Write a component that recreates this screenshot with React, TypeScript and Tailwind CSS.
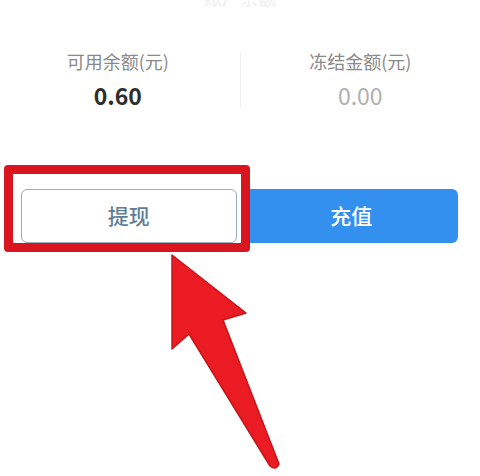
const FONT = { fontFamily: '"Noto Sans CJK SC", "Noto Sans", sans-serif' };

function Balance({ label, value, strong }: { label: string; value: string; strong?: boolean }) {
  return (
    <div className="flex flex-col items-center">
      <span className="text-[18px] leading-[24px] text-[#8a8a8a]">{label}</span>
      <span
        className={
          strong
            ? "mt-[7px] text-[23px] leading-[30px] font-bold text-[#2e2e2e]"
            : "mt-[7px] text-[23px] leading-[30px] text-[#b0b0b0]"
        }
      >
        {value}
      </span>
    </div>
  );
}

function Arrow() {
  return (
    <svg
      className="absolute left-0 top-0 pointer-events-none"
      width="480"
      height="476"
      viewBox="0 0 480 476"
    >
      <path
        d="M172 255 L246 313 L223 320 L279 464 Q276 471 270 466 L189 334 L172 349 Z"
        fill="#ea1b22"
        stroke="#c8141a"
        strokeWidth="1.5"
        strokeLinejoin="round"
      />
    </svg>
  );
}

export default function App() {
  return (
    <div className="relative w-[480px] h-[476px] overflow-hidden bg-white" style={FONT}>
      <div className="-mt-[16px] h-[20px] text-center text-[18px] text-[#ededed]">账户余额</div>

      <div className="mt-[45px] grid grid-cols-[1fr_1px_1fr] items-center">
        <div className="pr-[4px]">
          <Balance label="可用余额(元)" value="0.60" strong />
        </div>
        <div className="h-[56px] bg-[#f0f0f0]" />
        <div>
          <Balance label="冻结金额(元)" value="0.00" />
        </div>
      </div>

      <div className="mt-[79px] flex gap-[8px] pl-[21px] pr-[22px]">
        <button className="flex-1 h-[54px] rounded-[6px] border border-[#9aaebe] bg-white text-[21px] font-medium text-[#5f7d95]">
          提现
        </button>
        <button className="flex-1 h-[54px] rounded-[6px] bg-[#3490ee] text-[21px] font-medium text-white">
          充值
        </button>
      </div>

      <div className="absolute left-[4px] top-[165px] w-[246px] h-[87px] rounded-[4px] border-[9px] border-[#d9151f]" />
      <Arrow />
    </div>
  );
}
